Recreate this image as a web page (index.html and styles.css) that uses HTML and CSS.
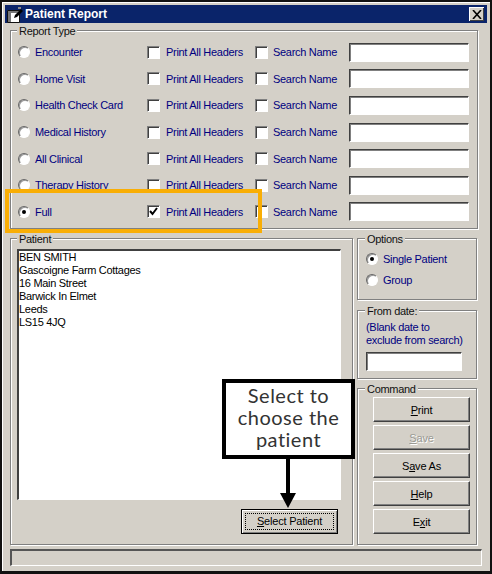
FILE: index.html
```html
<!DOCTYPE html>
<html lang="en">
<head>
    <meta charset="UTF-8">
    <title>Patient Report</title>
    <link rel="stylesheet" href="styles.css">
</head>
<body>
    <div class="window">
        <div class="titlebar">
            <svg class="app-icon" width="16" height="17" viewBox="0 0 16 17">
                <path d="M0.5 4.5h12v12H0.5z" fill="#fff" stroke="#111"/>
                <path d="M1 5h3v11H1zM4 5h8v2H4z" fill="#777"/>
                <path d="M8 9l6-6 2 2-6 6-3 1z" fill="#000"/>
                <path d="M11 1h3v2h-3z" fill="#8a8a8a"/>
            </svg>
            <span class="title">Patient Report</span>
            <span class="close">
                <svg width="10" height="9" viewBox="0 0 10 9"><path d="M1 0l8 9M9 0L1 9" fill="none" stroke="#000" stroke-width="1.6"/></svg>
            </span>
        </div>

        <fieldset class="group report-type">
            <legend>Report Type</legend>
            <div class="row">
                <span class="radio"></span><span class="label type-label">Encounter</span>
                <span class="check"></span><span class="label headers-label">Print All Headers</span>
                <span class="check"></span><span class="label search-label">Search Name</span>
                <span class="textbox"></span>
            </div>
            <div class="row">
                <span class="radio"></span><span class="label type-label">Home Visit</span>
                <span class="check"></span><span class="label headers-label">Print All Headers</span>
                <span class="check"></span><span class="label search-label">Search Name</span>
                <span class="textbox"></span>
            </div>
            <div class="row">
                <span class="radio"></span><span class="label type-label">Health Check Card</span>
                <span class="check"></span><span class="label headers-label">Print All Headers</span>
                <span class="check"></span><span class="label search-label">Search Name</span>
                <span class="textbox"></span>
            </div>
            <div class="row">
                <span class="radio"></span><span class="label type-label">Medical History</span>
                <span class="check"></span><span class="label headers-label">Print All Headers</span>
                <span class="check"></span><span class="label search-label">Search Name</span>
                <span class="textbox"></span>
            </div>
            <div class="row">
                <span class="radio"></span><span class="label type-label">All Clinical</span>
                <span class="check"></span><span class="label headers-label">Print All Headers</span>
                <span class="check"></span><span class="label search-label">Search Name</span>
                <span class="textbox"></span>
            </div>
            <div class="row">
                <span class="radio"></span><span class="label type-label">Therapy History</span>
                <span class="check"></span><span class="label headers-label">Print All Headers</span>
                <span class="check"></span><span class="label search-label">Search Name</span>
                <span class="textbox"></span>
            </div>
            <div class="row">
                <span class="radio selected"></span><span class="label type-label">Full</span>
                <span class="check">
                    <svg width="9" height="9" viewBox="0 0 9 9"><path d="M1 4l2.5 3L8 1" fill="none" stroke="#000" stroke-width="2"/></svg>
                </span><span class="label headers-label">Print All Headers</span>
                <span class="check"></span><span class="label search-label">Search Name</span>
                <span class="textbox"></span>
            </div>
        </fieldset>

        <div class="lower">
            <fieldset class="group patient">
                <legend>Patient</legend>
                <div class="address">
                    <div>BEN SMITH</div>
                    <div>Gascoigne Farm Cottages</div>
                    <div>16 Main Street</div>
                    <div>Barwick In Elmet</div>
                    <div>Leeds</div>
                    <div>LS15 4JQ</div>
                </div>
                <div class="select-row">
                    <button class="btn select-btn"><span class="focus"><u>S</u>elect Patient</span></button>
                </div>
            </fieldset>

            <div class="side">
                <fieldset class="group options">
                    <legend>Options</legend>
                    <div class="option"><span class="radio selected"></span><span class="label">Single Patient</span></div>
                    <div class="option"><span class="radio"></span><span class="label">Group</span></div>
                </fieldset>
                <fieldset class="group from-date">
                    <legend>From date:</legend>
                    <div class="label hint">(Blank date to<br>exclude from search)</div>
                    <span class="textbox date-box"></span>
                </fieldset>
                <fieldset class="group command">
                    <legend>Command</legend>
                    <button class="btn"><u>P</u>rint</button>
                    <button class="btn disabled"><u>S</u>ave</button>
                    <button class="btn">S<u>a</u>ve As</button>
                    <button class="btn"><u>H</u>elp</button>
                    <button class="btn">E<u>x</u>it</button>
                </fieldset>
            </div>
        </div>

        <div class="statusbar"></div>

        <!-- annotations on top of the screenshot -->
        <div class="highlight"></div>
        <div class="callout">Select to choose the patient</div>
        <div class="arrow-line"></div>
        <div class="arrow-head"></div>
    </div>
</body>
</html>
```

FILE: styles.css
```css
* {
    box-sizing: border-box;
}
html, body {
    margin: 0;
    padding: 0;
    background-color: #fff;
}
body {
    width: 492px;
    height: 574px;
    overflow: hidden;
    font-family: "Liberation Sans", Arial, sans-serif;
    font-size: 11px;
    letter-spacing: -0.3px;
    color: #000;
}
.window {
    position: relative;
    width: 492px;
    height: 574px;
    background-color: #d4d0c8;
    border: 2px solid #111;
    border-bottom-width: 3px;
    padding: 3px 3px 0 3px;
    box-shadow: inset 1px 1px 0 #fff;
}
.titlebar {
    height: 18px;
    background-color: #0a246a;
    color: #fff;
    display: flex;
    align-items: center;
    padding: 0 3px 0 2px;
}
.app-icon {
    flex: none;
}
.title {
    font-weight: bold;
    font-size: 12px;
    letter-spacing: 0;
    margin-left: 2px;
    flex: 1;
}
.close {
    width: 15px;
    height: 14px;
    background-color: #d4d0c8;
    display: flex;
    align-items: center;
    justify-content: center;
    box-shadow: inset 1px 1px 0 #fff, inset -1px -1px 0 #404040;
}
.group {
    margin: 0;
    padding: 0;
    min-width: 0;
    border: 1px solid #808080;
    box-shadow: inset 1px 1px 0 #fff, 1px 1px 0 #fff;
}
.group legend {
    padding: 0 2px;
    height: 14px;
    line-height: 16px;
    background-color: #d4d0c8;
    font-size: 11px;
    color: #111;
}
.report-type {
    margin-left: 5px;
    width: 468px;
    height: 206px;
    padding: 2px 0 0 7px;
}
.report-type legend {
    margin-left: -1px;
}
.row {
    display: flex;
    align-items: center;
    height: 26.6px;
}
.label {
    color: #000080;
    font-size: 11px;
    white-space: nowrap;
}
.radio {
    flex: none;
    width: 12px;
    height: 12px;
    border-radius: 50%;
    background-color: #fff;
    border: 1px solid;
    border-color: #666 #fff #fff #666;
    box-shadow: inset 1px 1px 0 #999;
    display: flex;
    align-items: center;
    justify-content: center;
}
.radio.selected::after {
    content: "";
    width: 4px;
    height: 4px;
    border-radius: 50%;
    background-color: #000;
}
.check {
    flex: none;
    width: 13px;
    height: 13px;
    background-color: #fff;
    border: 1px solid #fff;
    border-top-color: #808080;
    border-left-color: #808080;
    box-shadow: inset 1px 1px 0 #404040;
    display: flex;
    align-items: center;
    justify-content: center;
}
.type-label {
    width: 112px;
    margin-left: 5px;
}
.headers-label {
    width: 89px;
    margin-left: 6px;
}
.search-label {
    width: 76px;
    margin-left: 5px;
}
.textbox {
    flex: none;
    display: block;
    width: 120px;
    height: 19px;
    background-color: #fff;
    border: 1px solid #fff;
    border-top-color: #404040;
    border-left-color: #404040;
    box-shadow: inset 1px 1px 0 #808080;
}
.lower {
    display: flex;
    margin: 2px 0 0 5px;
    gap: 4px;
}
.patient {
    width: 343px;
    height: 314px;
    padding: 4px 11px 0 6px;
}
.address {
    height: 251px;
    width: 324px;
    background-color: #fff;
    border: 2px solid #404040;
    border-right: 1px solid #fff;
    border-bottom: 1px solid #fff;
    line-height: 13px;
    font-size: 11px;
}
.select-row {
    display: flex;
    justify-content: flex-end;
    margin-top: 9px;
}
.side {
    width: 120px;
    display: flex;
    flex-direction: column;
}
.options {
    height: 69px;
    padding: 3px 0 0 8px;
}
.options legend, .from-date legend {
    margin-left: -1px;
}
.option {
    display: flex;
    align-items: center;
    gap: 5px;
    height: 21px;
}
.from-date {
    margin-top: 3px;
    height: 76px;
    padding: 4px 0 0 8px;
}
.hint {
    line-height: 13px;
}
.date-box {
    width: 96px;
    margin-top: 5px;
}
.command {
    margin-top: 2px;
    height: 164px;
    padding: 2px 0 0 15px;
}
.command legend {
    margin-left: -8px;
}
.btn {
    display: block;
    width: 97px;
    height: 25px;
    margin: 0 0 3px 0;
    padding: 0;
    font-family: "Liberation Sans", Arial, sans-serif;
    font-size: 11px;
    letter-spacing: -0.2px;
    color: #000;
    background-color: #d4d0c8;
    border: 1px solid #404040;
    border-top-color: #fff;
    border-left-color: #fff;
    box-shadow: inset -1px -1px 0 #808080;
}
.btn.disabled {
    color: #9a9a94;
    text-shadow: 1px 1px 0 #fff;
}
.select-btn {
    margin: 0 3px 0 0;
    border: 1px solid #000;
    box-shadow: inset 1px 1px 0 #fff, inset -1px -1px 0 #808080;
    padding: 3px;
}
.focus {
    display: block;
    height: 100%;
    line-height: 16px;
    outline: 1px dotted #000;
    outline-offset: -1px;
}
.statusbar {
    margin: 4px 0 0 5px;
    width: 472px;
    height: 17px;
    border: 1px solid #fff;
    border-top: 2px solid #555;
    border-left: 2px solid #555;
}
.highlight {
    position: absolute;
    left: 3px;
    top: 187px;
    width: 257px;
    height: 44px;
    border: 4px solid #f9ae05;
}
.callout {
    position: absolute;
    left: 220px;
    top: 377px;
    width: 133px;
    height: 80px;
    padding: 1px 4px 0 4px;
    background-color: #fff;
    border: 4px solid #000;
    font-family: "Lato", "Liberation Sans", sans-serif;
    font-size: 20px;
    letter-spacing: 0.5px;
    line-height: 22px;
    text-align: center;
    color: #333;
}
.arrow-line {
    position: absolute;
    left: 284px;
    top: 457px;
    width: 4px;
    height: 34px;
    background-color: #000;
}
.arrow-head {
    position: absolute;
    left: 278px;
    top: 491px;
    width: 0;
    height: 0;
    border-left: 8px solid transparent;
    border-right: 8px solid transparent;
    border-top: 15px solid #000;
}
```
